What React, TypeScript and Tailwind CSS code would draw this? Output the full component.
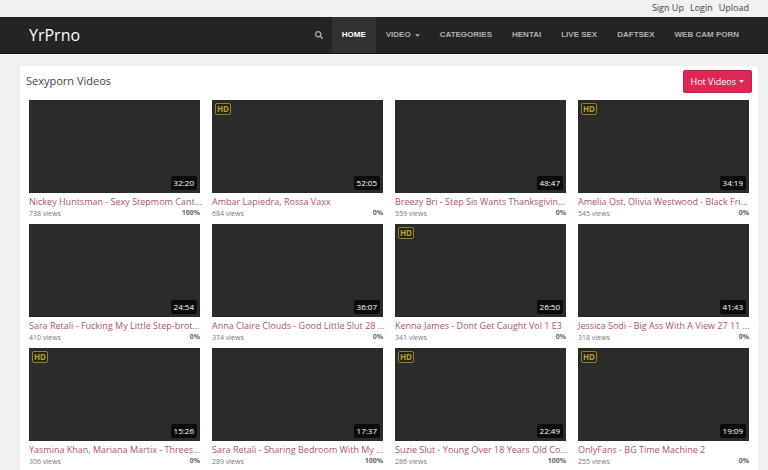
import { FaSearch } from 'react-icons/fa'

const accountLinks = ['Sign Up', 'Login', 'Upload']

const navLinks = [
  { label: 'HOME', active: true },
  { label: 'VIDEO', caret: true },
  { label: 'CATEGORIES' },
  { label: 'HENTAI' },
  { label: 'LIVE SEX' },
  { label: 'DAFTSEX' },
  { label: 'WEB CAM PORN' },
]

const videos = [
  { title: 'Nickey Huntsman - Sexy Stepmom Cant...', time: '32:20', views: 738, rating: 100, hd: false },
  { title: 'Ambar Lapiedra, Rossa Vaxx', time: '52:05', views: 684, rating: 0, hd: true },
  { title: 'Breezy Bri - Step Sis Wants Thanksgivin...', time: '48:47', views: 559, rating: 0, hd: false },
  { title: 'Amelia Ost, Olivia Westwood - Black Fri...', time: '34:19', views: 545, rating: 0, hd: true },
  { title: 'Sara Retali - Fucking My Little Step-brot...', time: '24:54', views: 410, rating: 0, hd: false },
  { title: 'Anna Claire Clouds - Good Little Slut 28 ...', time: '36:07', views: 374, rating: 0, hd: false },
  { title: 'Kenna James - Dont Get Caught Vol 1 E3', time: '26:50', views: 341, rating: 0, hd: true },
  { title: 'Jessica Sodi - Big Ass With A View 27 11 ...', time: '41:43', views: 318, rating: 0, hd: false },
  { title: 'Yasmina Khan, Mariana Martix - Threes...', time: '15:26', views: 306, rating: 0, hd: true },
  { title: 'Sara Retali - Sharing Bedroom With My ...', time: '17:37', views: 289, rating: 100, hd: false },
  { title: 'Suzie Slut - Young Over 18 Years Old Co...', time: '22:49', views: 286, rating: 100, hd: true },
  { title: 'OnlyFans - BG Time Machine 2', time: '19:09', views: 255, rating: 0, hd: true },
]

type Video = (typeof videos)[number]

function Caret() {
  return (
    <svg viewBox="0 0 6 3" className="w-[5px] h-[3px] fill-current" aria-hidden="true">
      <path d="M0 0h6L3 3z" />
    </svg>
  )
}

function Header() {
  return (
    <header className="border-b border-white">
      <div className="flex justify-end gap-[6px] h-[17px] pr-[19px] text-[9px] leading-4 text-[#444]">
        {accountLinks.map((label) => (
          <a key={label} href="#">{label}</a>
        ))}
      </div>
      <div className="flex justify-between h-[37px] pl-[29px] pr-[19px] bg-[#222426] border-b border-[#111]">
        <a href="#" className="flex items-center text-[16px] text-white">YrPrno</a>
        <nav className="flex font-['Liberation_Sans',sans-serif] text-[8px] font-bold text-[#b0b0b0]">
          <button type="button" aria-label="Search" className="px-[9px]">
            <FaSearch className="w-2 h-2" />
          </button>
          {navLinks.map((link) => (
            <a
              key={link.label}
              href="#"
              className={`flex items-center gap-1 px-[10px] whitespace-nowrap ${link.active ? 'bg-[#2f3133] text-white' : ''}`}
            >
              {link.label}
              {link.caret && <Caret />}
            </a>
          ))}
        </nav>
      </div>
    </header>
  )
}

function VideoCard({ video }: { video: Video }) {
  return (
    <article className="min-w-0">
      <a href="#" className="block">
        <div className="relative h-[93px] bg-[#2b2b2b]">
          {video.hd && (
            <span className="absolute top-[3px] left-[3px] w-4 h-3 rounded-xs border border-[#8f812f] bg-[#29240f] text-center text-[8px] leading-[10px] font-bold text-[#b5a43a]">
              HD
            </span>
          )}
          <span className="absolute right-[3px] bottom-[3px] px-[3px] rounded-xs bg-[#0c0c0c] text-[8px] leading-[14px] font-medium text-white">
            {video.time}
          </span>
        </div>
        <h2 className="h-4 pt-[2px] text-[9px] leading-[14px] whitespace-nowrap text-[#b0526d]">{video.title}</h2>
      </a>
      <div className="flex justify-between h-[15px] text-[7px] text-[#777]">
        <span className="leading-[10px]">{video.views} views</span>
        <span className="leading-[7px] font-bold text-[#666]">{video.rating}%</span>
      </div>
    </article>
  )
}

export default function App() {
  return (
    <div className="min-h-screen bg-[#f0f0f0] font-['Open_Sans','Noto_Sans',sans-serif]">
      <Header />
      <main className="mt-[11px] ml-5 mr-[10px] pb-3 bg-white">
        <div className="flex items-center justify-between pt-1 pb-[7px] pl-[6px] pr-[6px]">
          <h1 className="text-[11px] text-[#444]">Sexyporn Videos</h1>
          <button
            type="button"
            className="flex items-center gap-[3px] h-[23px] px-[7px] rounded-xs bg-[#dc2757] border border-[#c81f4c] text-[9px] text-white"
          >
            Hot Videos
            <Caret />
          </button>
        </div>
        <div className="grid grid-cols-4 gap-x-3 px-[9px]">
          {videos.map((video) => (
            <VideoCard key={video.title} video={video} />
          ))}
        </div>
      </main>
    </div>
  )
}
